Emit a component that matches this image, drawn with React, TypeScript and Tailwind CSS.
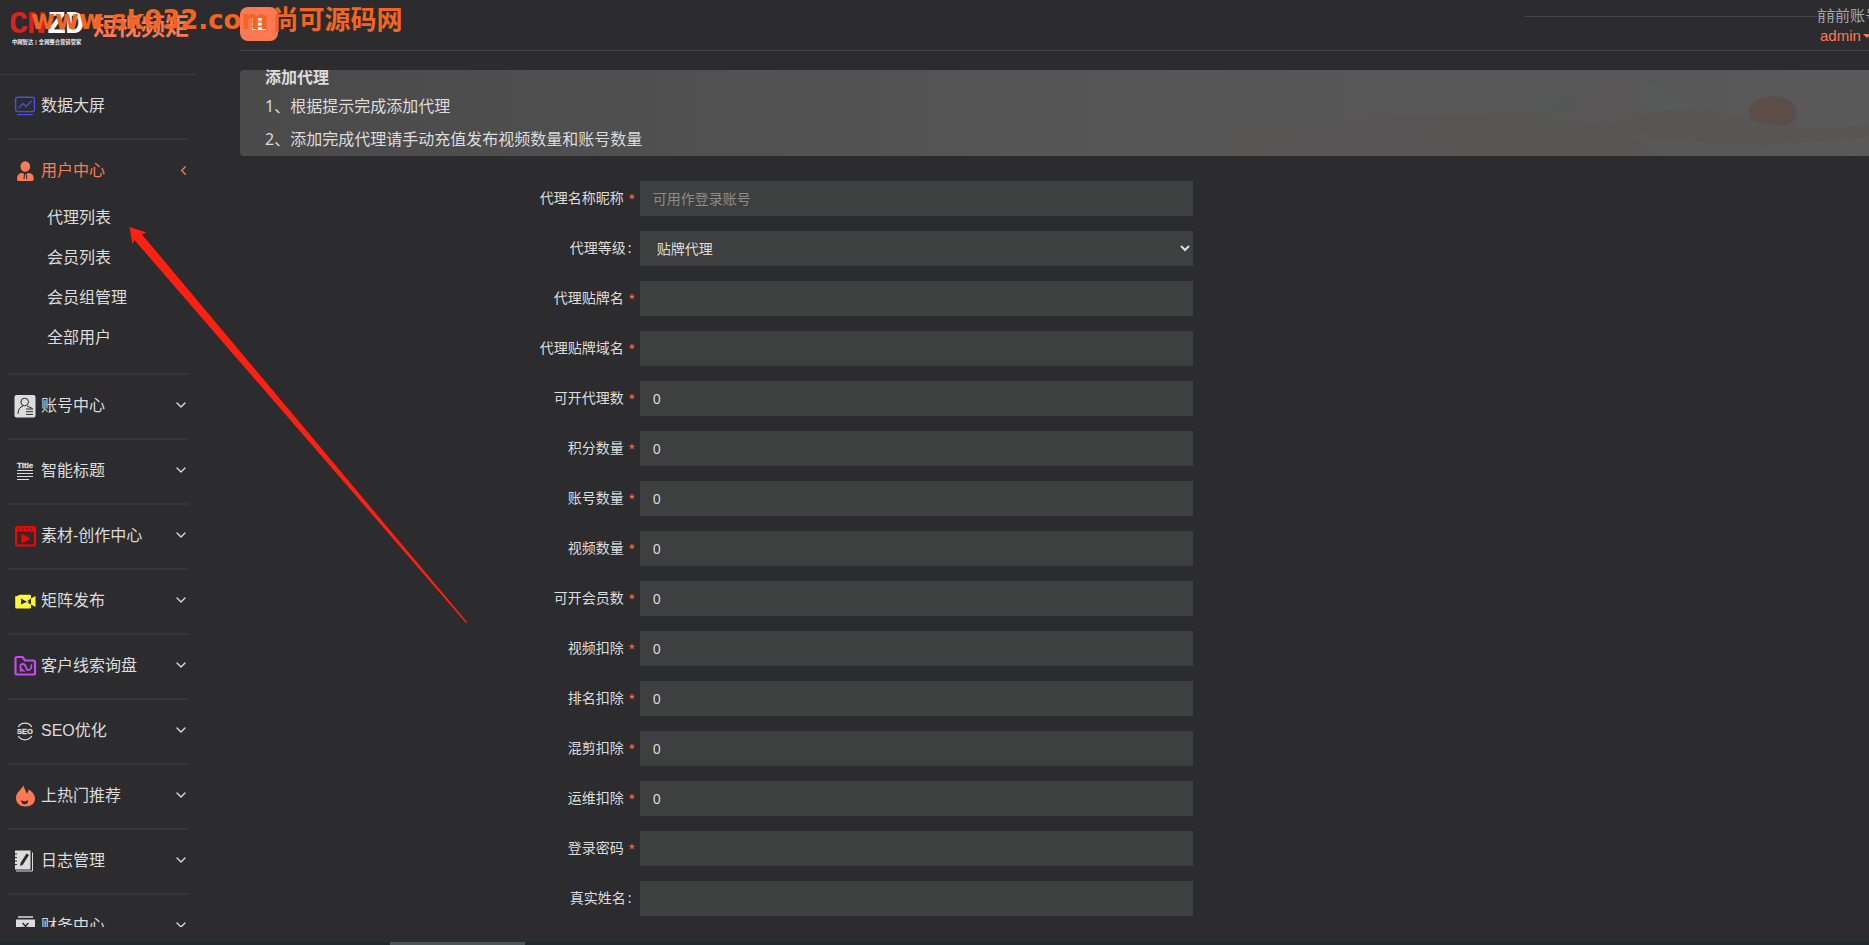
import { ReactNode, useState } from "react";
import { clsx } from "clsx";
import { ChevronDown, ChevronLeft } from "lucide-react";

const menu = [
  { name: "数据大屏", icon: <ScreenIcon />, leaf: true },
  {
    name: "用户中心",
    icon: <UserIcon />,
    children: ["代理列表", "会员列表", "会员组管理", "全部用户"],
  },
  { name: "账号中心", icon: <AccountIcon /> },
  { name: "智能标题", icon: <TitleIcon /> },
  { name: "素材-创作中心", icon: <MaterialIcon /> },
  { name: "矩阵发布", icon: <CameraIcon /> },
  { name: "客户线索询盘", icon: <FolderIcon /> },
  { name: "SEO优化", icon: <SeoIcon /> },
  { name: "上热门推荐", icon: <FireIcon /> },
  { name: "日志管理", icon: <LogIcon /> },
  { name: "财务中心", icon: <FinanceIcon /> },
];

const fields = [
  { id: "nickname", label: "代理名称昵称", required: true, placeholder: "可用作登录账号" },
  { id: "level", label: "代理等级", options: ["贴牌代理"] },
  { id: "brand", label: "代理贴牌名", required: true },
  { id: "domain", label: "代理贴牌域名", required: true },
  { id: "agents", label: "可开代理数", required: true, value: "0" },
  { id: "points", label: "积分数量", required: true, value: "0" },
  { id: "accounts", label: "账号数量", required: true, value: "0" },
  { id: "videos", label: "视频数量", required: true, value: "0" },
  { id: "members", label: "可开会员数", required: true, value: "0" },
  { id: "videoCost", label: "视频扣除", required: true, value: "0" },
  { id: "rankCost", label: "排名扣除", required: true, value: "0" },
  { id: "mixCost", label: "混剪扣除", required: true, value: "0" },
  { id: "opsCost", label: "运维扣除", required: true, value: "0" },
  { id: "password", label: "登录密码", required: true, type: "password" },
  { id: "realname", label: "真实姓名" },
];

export default function App() {
  return (
    <div className="relative flex h-screen flex-col overflow-hidden bg-[#2c2c2e] font-['Noto_Sans','Noto_Sans_CJK_SC',sans-serif] text-base text-[#dcdcdc]">
      <div className="flex min-h-0 flex-1">
        <Sidebar />
        <main className="flex min-w-0 flex-1 flex-col">
          <TopBar />
          <Banner />
          <AgentForm />
        </main>
      </div>
      <div className="h-[3px] shrink-0 bg-[#1b2b2f]">
        <div className="ml-[390px] h-full w-[135px] bg-[#48575a]" />
      </div>

      <p className="pointer-events-none absolute top-1 left-[31px] flex gap-1 font-['DejaVu_Sans','Noto_Sans_CJK_SC',sans-serif] text-[26px] leading-8 font-bold whitespace-nowrap text-[#f26522]">
        <span>www.sk032.com</span>
        <span>尚可源码网</span>
      </p>
      <Arrow />
    </div>
  );
}

function Sidebar() {
  const [open, setOpen] = useState("用户中心");

  return (
    <aside className="flex w-60 shrink-0 flex-col pb-[15px]">
      <div className="flex h-[75px] w-[196px] shrink-0 items-start gap-2 overflow-hidden border-b border-[#3d3d3f] pt-2 pl-[11px]">
        <Logo />
        <span className="w-24 shrink-0 overflow-hidden text-2xl leading-9 font-bold whitespace-nowrap text-[#ff7854]">
          短视频矩
        </span>
      </div>

      <nav className="min-h-0 w-[196px] flex-1 overflow-hidden px-2">
        {menu.map((item) => {
          const active = item.name === open && !!item.children;

          return (
            <section
              key={item.name}
              className="border-b-2 border-[#363638] pt-[15px] pb-[17px]"
            >
              <button
                type="button"
                onClick={() => setOpen(active ? "" : item.name)}
                className={clsx(
                  "flex h-[31px] w-full items-center gap-[6px] pr-[2px] pl-[7px] text-left font-['Liberation_Sans','Noto_Sans_CJK_SC',sans-serif]",
                  active && "text-[#ff7854]"
                )}
              >
                {item.icon}
                <span className="flex-1 whitespace-nowrap">{item.name}</span>
                {active && <ChevronLeft size={15} className="-mr-[5px]" />}
                {!active && !item.leaf && (
                  <ChevronDown size={16} className="-mr-[3px] mb-[2px]" />
                )}
              </button>

              {active && (
                <ul className="-mb-px pt-[11px] pl-[39px]">
                  {item.children?.map((child) => (
                    <li key={child}>
                      <a href="#" className="block leading-10">
                        {child}
                      </a>
                    </li>
                  ))}
                </ul>
              )}
            </section>
          );
        })}
      </nav>
    </aside>
  );
}

function TopBar() {
  return (
    <header className="flex h-[51px] shrink-0 items-start justify-between border-b border-[#454547]">
      <button
        type="button"
        aria-label="菜单"
        className="mt-[7px] flex h-[34px] w-[38px] items-center justify-center rounded-lg bg-[#ff7854]"
      >
        <svg width="14" height="12" viewBox="0 0 14 12" fill="#fff">
          <path d="M0 0h4v2.400H0zM6 0h8v2.400H6zM0 4.800h4v2.400H0zM6 4.800h8v2.400H6zM0 9.600h4V12H0zM6 9.600h8V12H6z" />
        </svg>
      </button>

      <div className="flex">
        <div className="mt-4 h-px w-[292px] bg-[#454547]" />
        <div className="w-[52px] overflow-hidden pt-1">
          <div className="flex text-[15px] leading-[22px] whitespace-nowrap text-[#a4a6a8]">
            <span className="w-[9px] shrink-0 overflow-hidden">前</span>
            <span className="w-[9px] shrink-0 overflow-hidden">前</span>
            <span>前账号</span>
          </div>
          <button
            type="button"
            className="flex items-center gap-[2px] pl-[3px] font-['Liberation_Sans',sans-serif] text-[15px] leading-5 text-[#ff7854]"
          >
            admin
            <svg width="8" height="4" viewBox="0 0 8 4" className="shrink-0" fill="currentColor">
              <path d="M0 0h8L4 4z" />
            </svg>
          </button>
        </div>
      </div>
    </header>
  );
}

function Banner() {
  return (
    <div className="relative mt-[19px] h-[86px] shrink-0 rounded-l bg-linear-to-r from-[#4a4a4b] via-[#555556] to-[#595959] pl-[25px]">
      <svg
        className="absolute top-0 right-0"
        width="639"
        height="86"
        viewBox="-250 0 639 86"
      >
        <path d="M-250 66C-160 52-60 44 0 45C60 46 100 52 140 56L180 86H-250Z" fill="#595553" opacity=".4" />
        <path d="M72 18L105 38L85 49L42 44L66 37Z" fill="#565958" opacity=".7" />
        <path d="M160 8L66 37L105 38L85 49L130 56L175 42Z" fill="#5a5655" opacity=".4" />
        <path d="M161 8L210 39L175 43L159 31Z" fill="#575b59" opacity=".8" />
        <path d="M271 50A24 16.500 0 1 1 307 56Q288 55 271 50Z" fill="#5c4d48" />
        <path d="M130 56C165 40 205 37 240 43C290 53 330 66 389 54V66C330 72 290 76 240 74C200 72 160 66 130 56Z" fill="#595552" opacity=".6" />
      </svg>
      <div className="relative">
        <h1 className="-mt-[5px] leading-[25px] font-bold">添加代理</h1>
        <p className="leading-[33px]">1、根据提示完成添加代理</p>
        <p className="leading-[33px]">2、添加完成代理请手动充值发布视频数量和账号数量</p>
      </div>
    </div>
  );
}

function AgentForm() {
  return (
    <form className="-mr-[15px] -ml-[15px] flex flex-col gap-[15px] pt-[25px] text-sm">
      {fields.map(({ id, label, required, placeholder, options, value, type }) => (
        <div key={id} className="flex h-[35px]">
          <label htmlFor={id} className="flex w-1/4 justify-end pr-[5px] leading-[34px]">
            {label}
            {required ? (
              <span className="w-[11px] pl-[5px] text-[11px] leading-[33px] text-[#ff7854]">*</span>
            ) : (
              <span className="w-[9px] pl-[2px]">:</span>
            )}
          </label>
          {options ? (
            <select id={id} className="w-1/3 bg-[#3e403f] pl-[13px] outline-none">
              {options.map((o) => (
                <option key={o}>{o}</option>
              ))}
            </select>
          ) : (
            <input
              id={id}
              type={type || "text"}
              defaultValue={value}
              placeholder={placeholder}
              className="w-1/3 bg-[#3e403f] px-[13px] outline-none placeholder:text-[#8b8d8c]"
            />
          )}
        </div>
      ))}
    </form>
  );
}

function Logo() {
  return (
    <svg width="74" height="40" viewBox="0 0 74 40" className="shrink-0 font-bold">
      <g className="font-['Liberation_Mono',monospace]" fontSize="32">
        <text x="-2 16" y="25" fill="#e0201c">CN</text>
        <text x="36 54" y="25" fill="#fff">ZD</text>
      </g>
      <text x="1" y="36" fontSize="5.300" fill="#eee">
        中网智达 | 全网整合营销管家
      </text>
    </svg>
  );
}

function Arrow() {
  return (
    <svg
      className="pointer-events-none absolute top-[226px] left-[128px]"
      width="342"
      height="400"
      viewBox="128 226 342 400"
      fill="#ff2012"
    >
      <path d="M129.500 227L146.500 232.500L142 234.500L467 622L466 623L134.500 240L132.500 244Z" />
    </svg>
  );
}

function Icon({ children }: { children: ReactNode }) {
  return (
    <svg width="20" height="20" viewBox="0 0 20 20" className="shrink-0 overflow-visible" fill="none">
      {children}
    </svg>
  );
}

function ScreenIcon() {
  return (
    <Icon>
      <g stroke="#4a4de0" strokeWidth="1.400">
        <rect x=".6" y="1.200" width="18.800" height="14.400" rx="1.800" />
        <path d="M3.500 12l4.500-4.500 3 3 5.500-5.500M2 18.600h16" />
      </g>
    </Icon>
  );
}

function UserIcon() {
  return (
    <Icon>
      <g fill="#ff7854">
        <ellipse cx="10.300" cy="5.500" rx="4.800" ry="5.300" />
        <path d="M6 12L9 12.500L8.500 18H9.500L10 13H10.700L11.200 18H12.200L11.600 12.500L14.500 12C17.500 12.500 19 14.500 18.700 18C18.600 19.500 18 20 16.500 20H4C2.500 20 2 19.500 2 18C2 14.500 3.300 12.500 6 12Z" />
      </g>
    </Icon>
  );
}

function AccountIcon() {
  return (
    <Icon>
      <rect x="-.5" y="-1" width="21" height="22.500" rx="2" fill="#dcdcdc" />
      <g stroke="#2c2c2e" strokeWidth="1">
        <circle cx="9.700" cy="6" r="3.800" />
        <path d="M3 18C3 13.500 5 11 8 10M12 10L17.500 12.500M11 13h7M11 15.700h7M11 18.400h7" />
      </g>
    </Icon>
  );
}

function TitleIcon() {
  return (
    <Icon>
      <text x="2" y="7" fontSize="8" fontWeight="700" fill="#dcdcdc" stroke="#dcdcdc" strokeWidth=".3">Title</text>
      <path d="M2 9.500h16M2 12.500h16M2 15.500h16M2 18.500h12" stroke="#dcdcdc" />
    </Icon>
  );
}

function MaterialIcon() {
  return (
    <Icon>
      <rect x="1" y="1" width="19" height="18.500" rx="1.500" stroke="#f00" strokeWidth="2" />
      <path d="M1 1h19v4.500H1zM6.500 7.500L15.500 12.500L6.500 17.500z" fill="#f00" />
      <path d="M3 1.500l1.500 2.500M7 1.500l1.500 2.500M11 1.500l1.500 2.500M15 1.500l1.500 2.500" stroke="#2c2c2e" />
    </Icon>
  );
}

function CameraIcon() {
  return (
    <Icon>
      <path d="M1.500 5.200L5 3.800H15Q16 3.800 16 5V7.500L20.500 5V16L16 13.500V16.500Q16 17.600 15 17.600H1.500Q.2 17.600 .2 16.300V5.200Z" fill="#fff83c" />
      <path d="M6 7.500L11.500 10.500L16 7.500V13.500L11.500 11L6 13.500z" fill="#2c2c2e" />
      <circle cx="12.500" cy="10.700" r="1" fill="#fff83c" />
    </Icon>
  );
}

function FolderIcon() {
  return (
    <Icon>
      <g stroke="#c44bec" strokeWidth="2.200">
        <path d="M.5 2.500Q.5 1 2 1H7.500L10 4.500H18Q20 4.500 20 6V17Q20 18.500 18.500 18.500H2Q.5 18.500 .5 17Z" />
        <path d="M4.500 14.500H8C4 12 5 8 8 8C12 8 10 14 13.500 14C16.500 14 17 10 16 8.500" strokeWidth="1.800" />
      </g>
    </Icon>
  );
}

function SeoIcon() {
  return (
    <Icon>
      <path d="M3.200 6A8 8 0 0 1 16.800 6M3.200 15A8 8 0 0 0 16.800 15" stroke="#dcdcdc" strokeWidth="1.300" />
      <text x="2" y="13.200" fontSize="7.500" fontWeight="700" fill="#dcdcdc" stroke="#dcdcdc" strokeWidth=".3">SEO</text>
    </Icon>
  );
}

function FireIcon() {
  return (
    <Icon>
      <path d="M8.500-.5C9 2.500 11 4.500 11.500 7.500C13 6.500 13.500 5 13.500 3.500C17.500 5.500 20 9 20 12.500C20 17.500 16 20.500 10.500 20.500C5 20.500 1 17 1 12C1 6.500 6 4 8.500-.5Z" fill="#ff7854" />
      <path d="M6 14C8 16 11 15.500 13 14C13.500 17 11.500 18.500 9.500 18.300C7.500 18.200 6 16.500 6 14Z" fill="#2c2c2e" />
    </Icon>
  );
}

function LogIcon() {
  return (
    <Icon>
      <path d="M17.500 1.500V20H1" stroke="#dcdcdc" />
      <path d="M0-.5H15.500V18.500H0z" fill="#dcdcdc" />
      <path d="M-1 3h3M-1 6.500h3M-1 10h3M-1 13.500h3" stroke="#2c2c2e" />
      <path d="M11.500 2.500L14 4L8 13.500L5.300 15.300L5.500 12z" fill="#2c2c2e" />
    </Icon>
  );
}

function FinanceIcon() {
  return (
    <Icon>
      <path d="M3 .2H18V1.800H3zM1 3.500H20V19H1z" fill="#dcdcdc" />
      <path d="M7.500 7L10.500 10L13.500 7M7.500 11.500H13.500M10.500 10V16" stroke="#2c2c2e" strokeWidth="1.500" />
    </Icon>
  );
}
